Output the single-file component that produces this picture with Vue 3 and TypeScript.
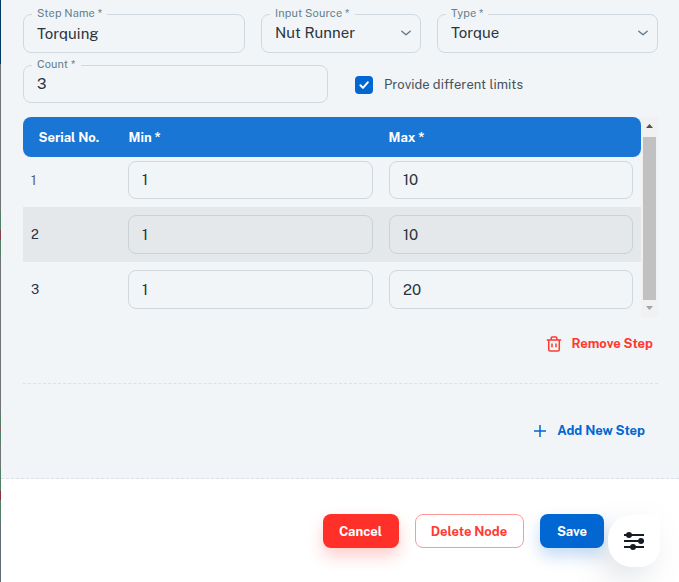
<script setup lang="ts">
import { ref } from 'vue'

interface Field { key: string; label: string; value: string; select: boolean }
interface Limit { serial: number; min: string; max: string }

const fields = ref<Field[]>([
  { key: 'name', label: 'Step Name *', value: 'Torquing', select: false },
  { key: 'source', label: 'Input Source *', value: 'Nut Runner', select: true },
  { key: 'type', label: 'Type *', value: 'Torque', select: true },
])
const limits = ref<Limit[]>([
  { serial: 1, min: '1', max: '10' },
  { serial: 2, min: '1', max: '10' },
  { serial: 3, min: '1', max: '20' },
])
const differentLimits = ref(true)
</script>

<template>
  <div class="screen">
    <div class="backdrop"></div>
    <main class="dialog">
      <section class="content">
        <div class="fields">
          <fieldset v-for="f in fields" :key="f.key" class="field" :class="f.key">
            <legend><span>{{ f.label }}</span></legend>
            <div class="value" :class="{ select: f.select }">
              <span>{{ f.value }}</span>
              <svg v-if="f.select" class="chevron" viewBox="0 0 12 12"><path d="M1.8 4.2 6 7.8l4.2-3.6" /></svg>
            </div>
          </fieldset>
        </div>
        <div class="count-row">
          <fieldset class="field count">
            <legend><span>Count *</span></legend>
            <div class="value"><span>3</span></div>
          </fieldset>
          <label class="check" @click="differentLimits = !differentLimits">
            <span class="box" :class="{ on: differentLimits }">
              <svg v-if="differentLimits" viewBox="0 0 18 18"><path d="m5.4 9.3 2.6 2.6 4.8-5.6" /></svg>
            </span>
            <span class="check-text">Provide different limits</span>
          </label>
        </div>

        <div class="table-wrap">
          <div class="table">
            <div class="thead"><span>Serial No.</span><span>Min *</span><span>Max *</span></div>
            <div v-for="l in limits" :key="l.serial" class="trow">
              <span class="serial">{{ l.serial }}</span>
              <div class="cell">{{ l.min }}</div>
              <div class="cell">{{ l.max }}</div>
            </div>
          </div>
          <div class="scrollbar">
            <svg class="arrow up" viewBox="0 0 17 20"><path d="M5 11h7L8.5 7z" /></svg>
            <div class="thumb"></div>
            <svg class="arrow down" viewBox="0 0 17 17"><path d="M5 6h7l-3.5 4z" /></svg>
          </div>
        </div>

        <div class="remove-row">
          <button class="link danger">
            <svg class="trash" viewBox="0 0 16 16"><path d="M.8 4h14.4M5.2 3.8V1.9q0-.9.9-.9h3.8q.9 0 .9.9v1.9M2.7 4v9.5q0 1.5 1.5 1.5h7.6q1.5 0 1.5-1.5V4M6 7.5v3.7M10 7.5v3.7" /></svg>
            <span>Remove Step</span>
          </button>
        </div>
        <div class="add-row">
          <button class="link primary">
            <svg class="plus" viewBox="0 0 12 12"><path d="M6 0v12M0 6h12" /></svg>
            <span>Add New Step</span>
          </button>
        </div>
      </section>

      <footer class="actions">
        <button class="btn cancel"><span>Cancel</span></button>
        <button class="btn delete"><span>Delete Node</span></button>
        <button class="btn save"><span>Save</span></button>
        <button class="settings" aria-label="Settings">
          <svg viewBox="0 0 20 18">
            <path d="M0 3h20M0 9h20M0 15h20" />
            <circle cx="5" cy="3" r="3" /><circle cx="17" cy="9" r="3" /><circle cx="9" cy="15" r="3" />
          </svg>
        </button>
      </footer>
    </main>
  </div>
</template>

<style>
body { margin: 0; overflow: hidden; }
</style>

<style scoped>
* { box-sizing: border-box; }
.screen { display: flex; width: 679px; height: 582px; overflow: hidden; background: #fff; font-family: "Public Sans", Inter, "Liberation Sans", sans-serif; color: #2b343e; }
.backdrop { width: 1px; flex: none; background: linear-gradient(#003768 0 64px, #707479 64px 212px, #527d67 212px 230px, #81444c 230px 240px, #527d67 240px 258px, #707479 258px 413px, #527d67 413px 425px, #7c6467 425px 431px, #527d67 431px 443px, #707479 443px 468px, #527d67 468px 491px, #922c36 491px 500px, #527d67 500px 524px, #656b75 524px); }
.dialog { flex: 1; display: flex; flex-direction: column; }
.content { height: 479px; flex: none; background: #f1f5f8; border-bottom: 1px dashed #d9e0e7; padding: 6px 21px 0 22px; }
.fields { display: grid; grid-template-columns: 222px 160px 221px; gap: 16px; }
.field { min-width: 0; margin: 0; height: 47px; padding: 0 13px; border: 1px solid #d0d9e0; border-radius: 8px; }
.field legend { height: 17px; margin-left: -5px; padding: 0 5px; font-size: 11px; line-height: 15px; color: #637f8d; letter-spacing: 0.13px; }
.value { display: flex; align-items: center; justify-content: space-between; height: 21px; font-size: 15px; line-height: 21px; }
.value.select { height: 19px; margin-right: -5px; }
.chevron { width: 12px; height: 12px; fill: none; stroke: #637886; stroke-width: 1.4; stroke-linecap: round; stroke-linejoin: round; }
.count-row { display: flex; margin-top: 4px; }
.count { width: 305px; height: 46px; }
.count .value { height: 20px; line-height: 20px; }
.check { display: flex; align-items: center; margin: 9px 0 0 27px; height: 37px; font-size: 13px; color: #48525b; }
.box { width: 18px; height: 18px; border-radius: 4px; border: 2px solid #637886; }
.box.on { border: 0; background: #0067d3; }
.box svg { display: block; width: 18px; height: 18px; fill: none; stroke: #fff; stroke-width: 2; stroke-linecap: round; stroke-linejoin: round; }
.check-text { margin-left: 11px; letter-spacing: 0.06px; }
.table-wrap { display: flex; width: 635px; height: 200px; margin-top: 14px; }
.table { width: 618px; }
.thead { display: grid; grid-template-columns: 90px 260px 1fr; align-items: center; height: 40px; padding-left: 15.5px; border-radius: 8px; background: #1976d5; color: #fff; font-size: 13px; font-weight: 700; }
.trow { display: grid; grid-template-columns: 81px 245px 244px; gap: 16px; align-items: center; height: 55px; padding-left: 8px; }
.trow:nth-child(2) { height: 50px; padding-bottom: 4px; }
.trow:nth-child(2) .cell { height: 38px; line-height: 36px; }
.trow:nth-child(2) .serial { color: #59636c; }
.trow:nth-child(3) { background: #e4e8eb; }
.trow:nth-child(3) .cell { border-color: #cbd2d6; }
.serial { font-size: 13px; }
.cell { height: 39px; padding-left: 13px; border: 1px solid #d1d8dd; border-radius: 8px; font-size: 15px; line-height: 37px; }
.scrollbar { width: 17px; display: flex; flex-direction: column; align-items: center; background: #f1f1f1; }
.arrow { display: block; width: 17px; height: 17px; fill: #505050; }
.arrow.up { height: 20px; }
.arrow.down { fill: #a3a3a3; }
.thumb { width: 13px; height: 163px; background: #c1c1c1; }
button { font-family: inherit; margin: 0; }
.remove-row { display: flex; justify-content: flex-end; width: 635px; height: 67px; padding: 9px 5px 0 0; border-bottom: 1px dashed #dbe1e7; }
.add-row { display: flex; justify-content: flex-end; width: 635px; padding: 29px 13px 0 0; }
.link { display: flex; align-items: center; height: 35px; padding: 0; border: 0; background: none; font-size: 13px; font-weight: 700; }
.link svg { fill: none; stroke: currentColor; }
.danger { color: #ff3930; }
.primary { color: #0067d3; }
.trash { width: 16px; height: 16px; margin-right: 9px; stroke-width: 1.5; }
.plus { width: 12px; height: 12px; margin-right: 11px; stroke-width: 1.5; }
.actions { flex: 1; display: flex; align-items: flex-start; padding: 35px 0 0 322px; gap: 16px; background: #fff; }
.btn { flex: none; height: 34px; padding: 0; border: 0; border-radius: 8px; color: #fff; font-size: 13px; font-weight: 700; }
.cancel { width: 76px; padding-right: 1px; background: #ff3029; box-shadow: 0 8px 16px rgba(255, 48, 41, 0.24); }
.delete { width: 109px; padding-right: 1px; background: #fff; border: 1px solid #ff9894; color: #ff3b34; }
.save { width: 64px; background: #0067d3; box-shadow: 0 8px 16px rgba(0, 103, 211, 0.24); }
.settings { flex: none; display: flex; align-items: center; justify-content: center; width: 52px; height: 52px; margin: 1px 0 0 -12px; padding: 0; border: 0; border-radius: 24px 4px 20px 24px; background: #fff; box-shadow: -8px 12px 32px -4px rgba(99, 115, 129, 0.25); }
.settings svg { width: 20px; height: 18px; fill: #161c24; stroke: none; }
.settings path { stroke: #161c24; stroke-width: 2; }
</style>
